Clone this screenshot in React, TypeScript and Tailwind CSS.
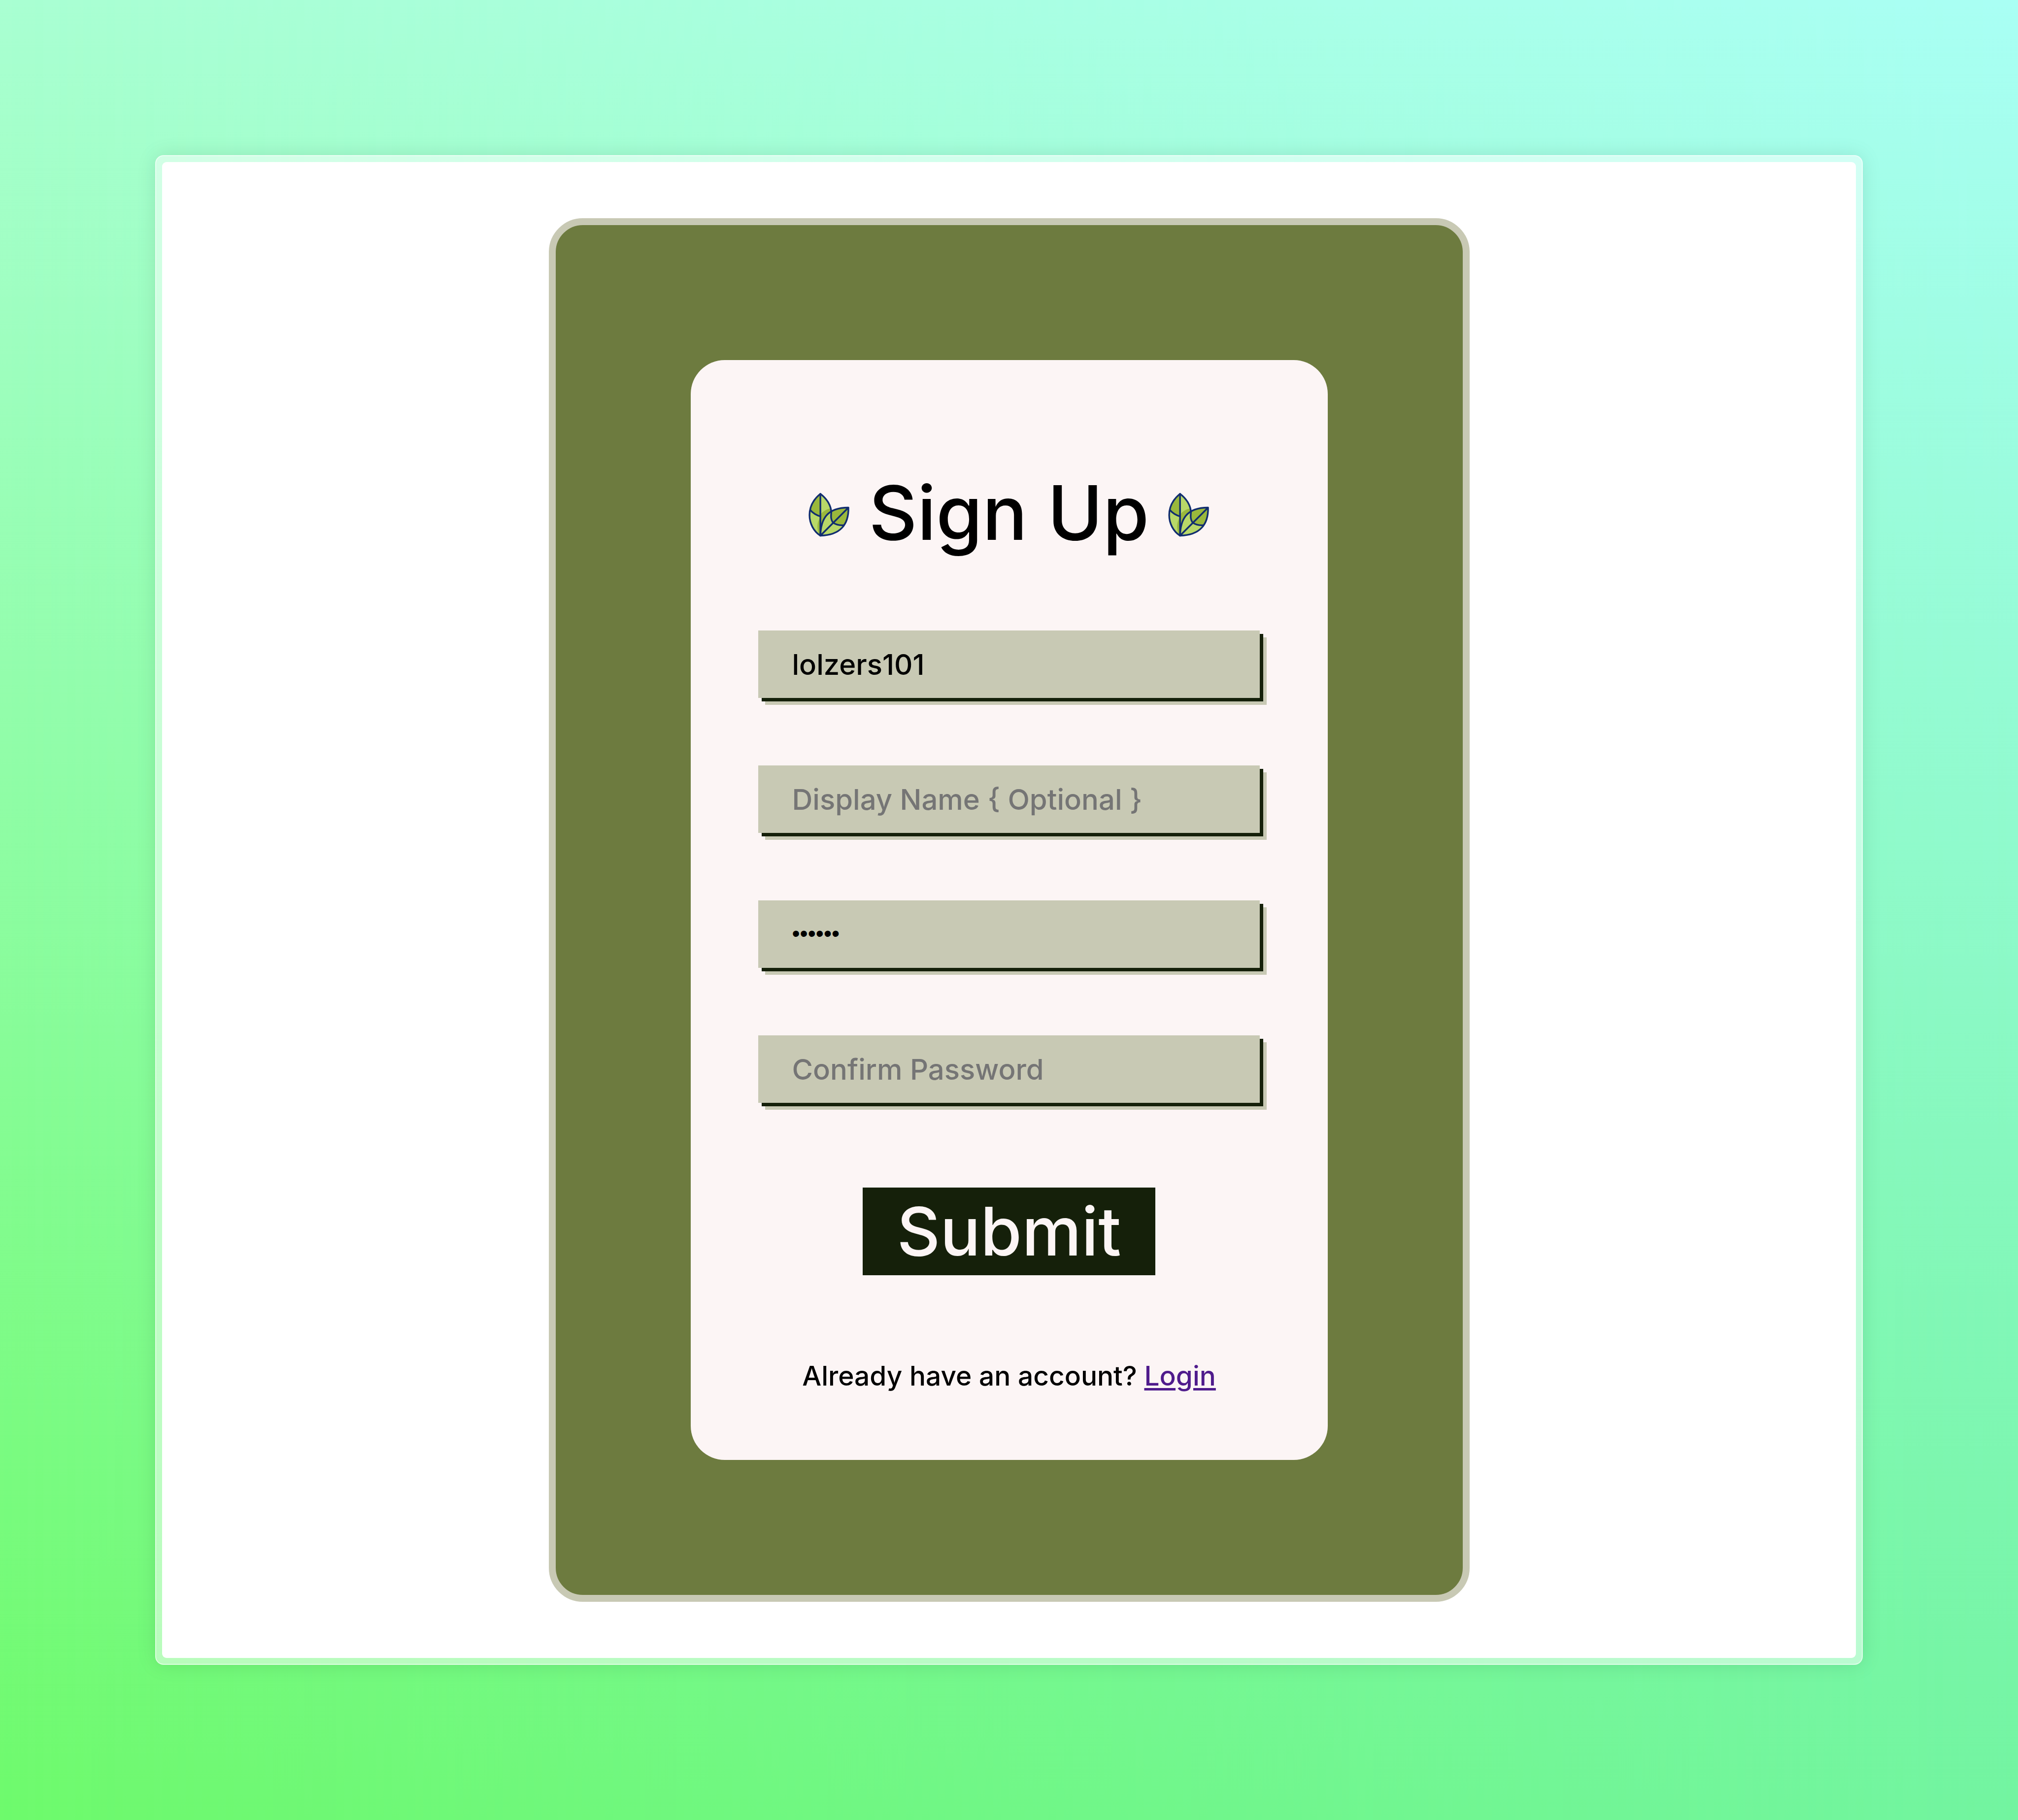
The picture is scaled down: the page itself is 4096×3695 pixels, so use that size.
import React from "react";

function Leaf() {
  return (
    <svg viewBox="0 0 98 106" className="mt-[8px] h-[90px] w-[84px] shrink-0" aria-hidden="true">
      <path d="M28 2C48 18 56 40 54 60C52 80 40 96 28 104C12 93 1 74 1 54C1 34 12 16 28 2Z" fill="#b8d868" />
      <path d="M28 2V57C19 54 10 50 4 43C7 27 15 13 28 2Z" fill="#9ab83c" />
      <path d="M28 53C34 45 42 40 52 38C54 60 45 85 28 104C18 90 19 72 28 59Z" fill="#9ab83c" />
      <path d="M28 102C29 65 42 36 96 36C97 76 76 103 28 103Z" fill="#b8d868" />
      <path d="M96 36L58 72C52 64 52 54 54 44C64 38 78 36 96 36Z" fill="#9ab83c" />
      <path d="M96 36L58 72C66 77 74 79 84 78C92 67 96 53 96 36Z" fill="#9ab83c" />
      <g fill="none" stroke="#112d6f" strokeWidth="4" strokeLinejoin="round" strokeLinecap="round">
        <path d="M28 103C12 93 2 74 2 54C2 34 12 16 28 3C44 15 54 32 54 48C53 58 53 65 58 72C66 77 74 79 84 78" />
        <path d="M28 3V103" />
        <path d="M4 42C10 49 18 54 28 57" />
        <path d="M28 103C29 65 42 36 95 36C96 76 76 102 28 103L95 36" />
      </g>
    </svg>
  );
}

const field =
  "block h-[137px] w-full border-0 bg-[#c8c9b4] px-[69px] leading-[70px] font-medium text-black outline-none placeholder:text-[#757575] placeholder:opacity-100 shadow-[7px_7px_0_0_#15200a,14px_14px_0_0_#c8c9b4]";

export default function App() {
  return (
    <main className="relative isolate flex min-h-screen w-full bg-[linear-gradient(to_top,#6efa6c,#a9ffd2)] p-[315px] font-['Inter',sans-serif] text-black">
      <div
        className="absolute inset-0 -z-10 bg-[linear-gradient(to_top,#72f4a0,#a9fff4)] [mask-image:linear-gradient(to_right,transparent,black)]"
        aria-hidden="true"
      />
      <div className="flex w-full rounded-[17px] border-2 border-white/50 bg-white/50 p-[12px] shadow-[0_0_40px_rgba(0,0,0,0.1)]">
        <div className="flex w-full items-center justify-center rounded-[9px] bg-white">
          <section className="rounded-[69px] border-[14px] border-[#c8c9b4] bg-[#6d7b3f] p-[274px]">
            <form
              className="flex w-[1293px] flex-col items-center rounded-[69px] bg-[#fcf5f5] px-[137px] pt-[218px] pb-[139px]"
              onSubmit={(e) => e.preventDefault()}
            >
              <div className="flex items-center justify-center gap-[38px]">
                <Leaf />
                <h1 className="text-[152px] leading-[184px] font-medium">Sign Up</h1>
                <Leaf />
              </div>
              <div className="mt-[147px] flex w-full flex-col gap-[137px] pr-px">
                <input className={`${field} text-[58px]`} type="text" aria-label="Username" defaultValue="lolzers101" />
                <input className={`${field} text-[58px]`} type="text" aria-label="Display name" placeholder="Display Name { Optional }" />
                <input
                  className={`${field} pb-[4px] font-['Liberation_Sans',sans-serif] text-[46px]`}
                  type="password"
                  aria-label="Password"
                  defaultValue="secret"
                />
                <input className={`${field} text-[58px]`} type="password" aria-label="Confirm password" placeholder="Confirm Password" />
              </div>
              <button type="submit" className="mt-[172px] h-[178px] bg-[#15200a] px-[69px] text-[136px] leading-[178px] font-medium text-[#fcf5f5]">
                Submit
              </button>
              <p className="mt-[172px] text-[55px] leading-[64px] font-medium whitespace-nowrap">
                Already have an account?{" "}
                <a href="#login" className="text-[#4f1b8c] underline decoration-[5px] underline-offset-[5px]">
                  Login
                </a>
              </p>
            </form>
          </section>
        </div>
      </div>
    </main>
  );
}
